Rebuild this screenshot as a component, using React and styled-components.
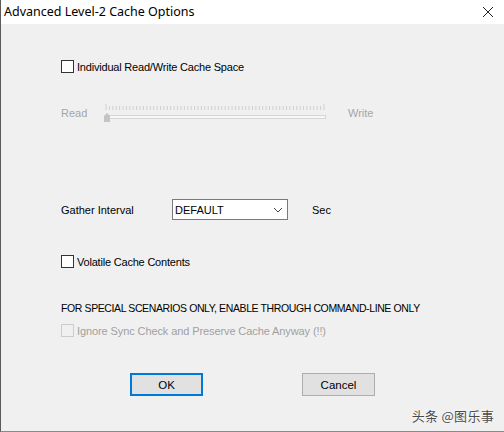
import React from "react";
import styled, { createGlobalStyle } from "styled-components";

const GlobalStyle = createGlobalStyle`
    html, body {
        margin: 0;
        padding: 0;
        width: 504px;
        height: 432px;
        overflow: hidden;
        background: #f0f0f0;
    }
`;

const Window = styled.div`
    position: relative;
    width: 504px;
    height: 432px;
    box-sizing: border-box;
    display: flex;
    flex-direction: column;
    border-left: 1px solid #5a5a5a;
    border-bottom: 1px solid #8a8a8a;
    font-family: "Liberation Sans", Arial, sans-serif;
    font-size: 11px;
    color: #000;
`;

const TitleBar = styled.div`
    height: 24px;
    background: #fff;
    display: flex;
    align-items: center;
    justify-content: space-between;
    padding: 0 10px 0 3px;
    flex-shrink: 0;
`;

const Title = styled.div`
    font-family: "Noto Sans", "Open Sans", sans-serif;
    font-size: 12.5px;
    color: #000;
    padding-bottom: 2px;
`;

const Close = styled.div`
    width: 12px;
    height: 12px;
    display: flex;
`;

const Body = styled.div`
    flex: 1;
    background: #f0f0f0;
    padding-left: 60px;
    display: flex;
    flex-direction: column;
`;

const Row = styled.div`
    display: flex;
    align-items: center;
    margin-top: ${(p) => p.$top}px;
    height: ${(p) => p.$h || 13}px;
`;

const Box = styled.div`
    width: 13px;
    height: 13px;
    box-sizing: border-box;
    border: 1px solid ${(p) => (p.$disabled ? "#cccccc" : "#333333")};
    background: ${(p) => (p.$disabled ? "#f0f0f0" : "#ffffff")};
    margin-right: 3px;
    flex-shrink: 0;
`;

const Label = styled.span`
    color: ${(p) => (p.$disabled ? "#a0a0a0" : "#000")};
    white-space: nowrap;
    letter-spacing: ${(p) => p.$ls || 0}px;
`;

const FieldLabel = styled.span`
    width: 111px;
    white-space: nowrap;
    color: #000;
`;

const SliderLabel = styled.span`
    color: #a6a6a6;
    width: ${(p) => p.$w}px;
    white-space: nowrap;
`;

const SliderWrap = styled.div`
    width: 224px;
    height: 22px;
    margin-right: 20px;
    display: flex;
`;

const Field = styled.div`
    width: 116px;
    height: 21px;
    box-sizing: border-box;
    border: 1px solid #7a7a7a;
    background: #fff;
    display: flex;
    align-items: center;
    justify-content: space-between;
    padding: 0 4px 0 2px;
    margin: 0 24px 0 0;
`;

const Note = styled.div`
    margin-top: ${(p) => p.$top}px;
    height: 13px;
    display: flex;
    align-items: center;
    white-space: nowrap;
    font-size: 10.5px;
    letter-spacing: -0.39px;
`;

const ButtonBar = styled.div`
    display: flex;
    margin-top: 36px;
    padding-left: 69px;
    gap: 99px;
`;

const Button = styled.div`
    width: 73px;
    height: 23px;
    box-sizing: border-box;
    background: #e1e1e1;
    border: ${(p) => (p.$default ? "2px solid #0078d7" : "1px solid #adadad")};
    display: flex;
    align-items: center;
    justify-content: center;
    font-size: 11.5px;
`;

const Watermark = styled.div`
    position: absolute;
    right: 10px;
    bottom: 6px;
    font-family: "Noto Sans CJK SC", sans-serif;
    font-size: 13px;
    color: #4a4a4a;
    text-shadow: 0 0 2px #fff, 0 0 1px #fff;
    letter-spacing: 0.3px;
`;

const Slider = () => {
    const ticks = [];
    const count = 64;
    for (let i = 0; i <= count; i++) {
        const x = 2 + (i * 218) / count;
        const tall = i === 0 || i === count;
        ticks.push(
            <line key={i} x1={x} x2={x} y1={tall ? 2 : 4} y2={8} stroke="#cfcfcf" strokeWidth="1" />
        );
    }
    return (
        <svg width="224" height="22" viewBox="0 0 224 22">
            {ticks}
            <rect x="1.5" y="13.5" width="220" height="3" fill="#f7f7f7" stroke="#d6d6d6" />
            <path d="M0 14 L3 11 L6 14 L6 20 L0 20 Z" fill="#c4c4c4" />
        </svg>
    );
};

const App = () => {
    return (
        <React.Fragment>
            <GlobalStyle />
            <Window>
                <TitleBar>
                    <Title>Advanced Level-2 Cache Options</Title>
                    <Close>
                        <svg width="12" height="12" viewBox="0 0 12 12">
                            <path d="M1 1 L11 11 M11 1 L1 11" stroke="#222" strokeWidth="1" />
                        </svg>
                    </Close>
                </TitleBar>
                <Body>
                    <Row $top={36}>
                        <Box />
                        <Label $ls={-0.2}>Individual Read/Write Cache Space</Label>
                    </Row>
                    <Row $top={29} $h={22}>
                        <SliderLabel $w={43}>Read</SliderLabel>
                        <SliderWrap>
                            <Slider />
                        </SliderWrap>
                        <SliderLabel $w={40}>Write</SliderLabel>
                    </Row>
                    <Row $top={75} $h={21}>
                        <FieldLabel>Gather Interval</FieldLabel>
                        <Field>
                            <span>DEFAULT</span>
                            <svg width="10" height="6" viewBox="0 0 10 6">
                                <path d="M1 1 L5 5 L9 1" stroke="#444" strokeWidth="1" fill="none" />
                            </svg>
                        </Field>
                        <Label>Sec</Label>
                    </Row>
                    <Row $top={35}>
                        <Box />
                        <Label $ls={-0.2}>Volatile Cache Contents</Label>
                    </Row>
                    <Note $top={33}>FOR SPECIAL SCENARIOS ONLY, ENABLE THROUGH COMMAND-LINE ONLY</Note>
                    <Row $top={10}>
                        <Box $disabled />
                        <Label $disabled $ls={-0.1}>Ignore Sync Check and Preserve Cache Anyway (!!)</Label>
                    </Row>
                    <ButtonBar>
                        <Button $default>OK</Button>
                        <Button>Cancel</Button>
                    </ButtonBar>
                </Body>
                <Watermark>头条 @图乐事</Watermark>
            </Window>
        </React.Fragment>
    );
};

export default App;
